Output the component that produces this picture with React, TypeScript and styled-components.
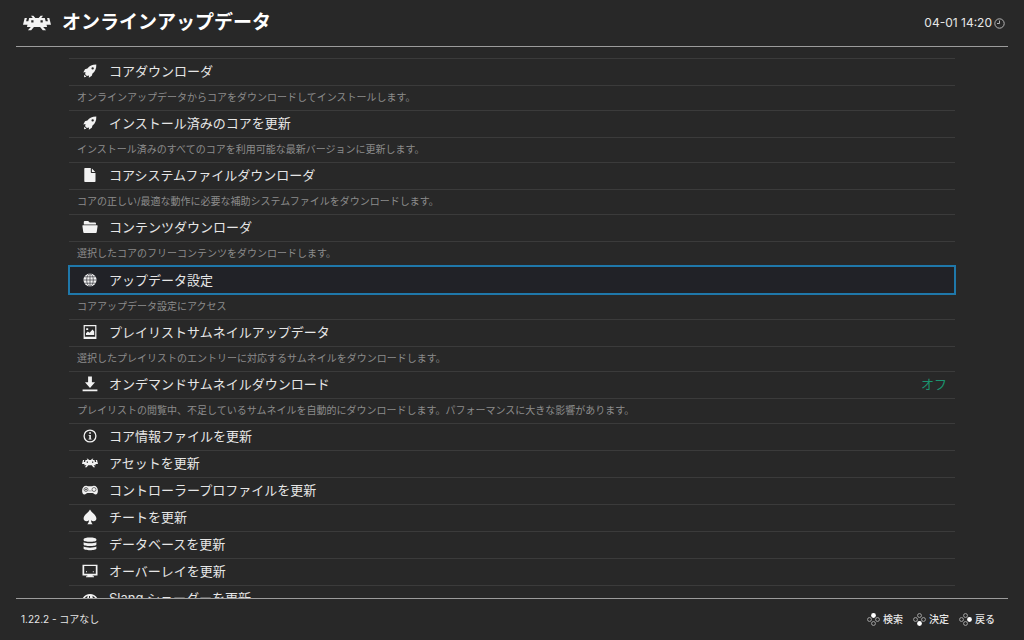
import React from "react";
import styled, { createGlobalStyle } from "styled-components";
import { SiRetroarch } from "react-icons/si";

const GlobalStyle = createGlobalStyle`
  * { box-sizing: border-box; }
  body {
    margin: 0;
    background: #282828;
    color: #e6e6e6;
    font-family: Inter, "Noto Sans CJK JP", sans-serif;
  }
`;

const Page = styled.div`
  display: flex;
  flex-direction: column;
  height: 100vh;
  padding: 0 16px;
`;

const Header = styled.header`
  display: flex;
  align-items: center;
  flex: none;
  height: 47px;
  padding: 0 3px 0 7px;
  border-bottom: 1px solid #9c9c9c;
`;

const Logo = styled(SiRetroarch)`
  width: 28px;
  height: 28px;
  margin-right: 11px;
  color: #f4f4f4;
`;

const Title = styled.h1`
  margin: 0;
  font-size: 19px;
  line-height: 28px;
  font-weight: 700;
  color: #ffffff;
`;

const Clock = styled.div`
  display: flex;
  align-items: center;
  gap: 2px;
  margin-left: auto;
  font-size: 12px;
  line-height: 16px;
`;

const Main = styled.main`
  flex: 1;
  min-height: 0;
  overflow: hidden;
  padding: 11px 53px 0;
`;

const Menu = styled.ul`
  list-style: none;
  margin: 0;
  padding: 0;
`;

const Row = styled.button<{ $selected?: boolean }>`
  display: flex;
  align-items: center;
  gap: 11px;
  width: 100%;
  height: ${(p) => (p.$selected ? 28 : 27)}px;
  padding: 0 8px 2px 13px;
  border: 0;
  border-top: 1px solid #3b3b3b;
  background: ${(p) => (p.$selected ? "#212227" : "transparent")};
  outline: ${(p) => (p.$selected ? "2px solid #1f78aa" : "none")};
  outline-offset: -1px;
  color: inherit;
  font: inherit;
  font-size: 13px;
  line-height: 20px;
  text-align: left;
`;

const Value = styled.span`
  margin-left: auto;
  color: #1b9470;
`;

const Description = styled.p`
  margin: 0;
  height: 25px;
  padding: 0 8px;
  border-top: 1px solid #3b3b3b;
  font-size: 10px;
  line-height: 22px;
  color: #8c8c8c;
  white-space: nowrap;
`;

const Footer = styled.footer`
  display: flex;
  align-items: center;
  justify-content: space-between;
  flex: none;
  height: 42px;
  padding: 0 13px 1px 5px;
  border-top: 1px solid #9c9c9c;
  font-size: 10px;
  line-height: 16px;
`;

const Actions = styled.div`
  display: flex;
  gap: 10px;
`;

const Action = styled.button`
  display: flex;
  align-items: center;
  gap: 3px;
  padding: 0;
  border: 0;
  background: none;
  color: inherit;
  font: inherit;
  font-weight: 500;
`;

const Glyph = styled.svg`
  display: block;
  flex: none;
  width: 16px;
  height: 16px;
  fill: #f2f2f2;
`;

const MenuLogo = styled(SiRetroarch)`
  flex: none;
  width: 16px;
  height: 16px;
  color: #f2f2f2;
`;

const PadGlyph = styled.svg`
  width: 13px;
  height: 13px;
  fill: none;
  stroke: #a8a8a8;
`;

const ClockGlyph = styled.svg`
  width: 11px;
  height: 11px;
  fill: none;
  stroke: #b4b4b4;
`;

const drawings: Record<string, React.ReactNode> = {
  rocket: (
    <path
      fillRule="evenodd"
      d="M14.3 1.5C10.2 1.5 7.4 3 5.4 5.6L3 6.2 1.3 9.4 3.5 9 3.1 11.2 4.9 13 7.1 12.4 6.8 14.7 9.8 12.8 10.5 10.6C13.1 8.5 14.5 5.8 14.3 1.5ZM10.7 4.2A1.2 1.2 0 1 1 10.6 6.6 1.2 1.2 0 0 1 10.7 4.2ZM2.3 11.7 4.4 13.8 2 14.2Z"
    />
  ),
  file: <path d="M2.3 1.6Q2.3 1 3 1H8.8V5.3Q8.8 6 9.5 6H13.5V14.3Q13.5 15 12.8 15H3Q2.3 15 2.3 14.3ZM9.9 1.4 13.2 4.9H9.9Z" />,
  folder: (
    <path d="M1.8 5.6V3Q1.8 2 2.8 2H6.2L7.7 3.5H13Q14 3.5 14 4.5V5.6ZM.9 6.3H15.1Q15.7 6.3 15.6 7L14.7 13.2Q14.6 14 13.8 14H2.2Q1.4 14 1.3 13.2L.4 7Q.3 6.3 .9 6.3Z" />
  ),
  globe: (
    <>
      <circle cx="8" cy="8" r="6.5" />
      <g fill="none" stroke="#3a3b40" strokeWidth=".7">
        <ellipse cx="8" cy="8" rx="3.3" ry="6.3" />
        <path d="M8 1.5V14.5M1.5 8H14.5M2.6 4.8H13.4M2.6 11.2H13.4" />
      </g>
    </>
  ),
  image: (
    <path
      fillRule="evenodd"
      d="M1.6 1H14.4V15H1.6ZM2.8 2.2V12.8H13.2V2.2ZM4 11V9.3L5.8 7.6 7.6 8.7 10.5 5.5 12.2 7.5V11ZM4.2 4.2H6.2V6H4.2Z"
    />
  ),
  download: <path d="M6.1 .6H9.9V6.3H13L8 12 3 6.3H6.1ZM.6 13.6H15.4V15.3H.6Z" />,
  info: (
    <>
      <circle cx="8" cy="8" r="5.9" fill="none" stroke="#f2f2f2" strokeWidth="1.3" />
      <path d="M7.2 4.3H8.9V5.8H7.2ZM6.6 6.9H8.9V10.7H9.6V11.6H6.5V10.7H7.3V7.8H6.6Z" />
    </>
  ),
  pad: (
    <>
      <path d="M4.2 3.8Q5.2 3.8 6 4.3H10Q10.8 3.8 11.8 3.8C14.2 3.8 15.9 5.9 15.9 8.7 15.9 11 15 12.4 13.6 12.4 12.2 12.4 11.6 11.4 10.5 11.1H5.5C4.4 11.4 3.8 12.4 2.4 12.4 1 12.4 .1 11 .1 8.7 .1 5.9 1.8 3.8 4.2 3.8Z" />
      <g fill="none" stroke="#444" strokeWidth=".7">
        <circle cx="4" cy="7.5" r="2" />
        <circle cx="12" cy="7.5" r="2" />
        <path d="M4 6.4V8.6M2.9 7.5H5.1M6.6 8.9H7.6M8.4 8.9H9.4" />
      </g>
    </>
  ),
  spade: (
    <path d="M8 .6C9.3 3.6 14.4 6 14.4 9.6 14.4 12.3 11 13.1 9 11.2 9.1 13 9.7 14.3 10.7 15.3H5.3C6.3 14.3 6.9 13 7 11.2 5 13.1 1.6 12.3 1.6 9.6 1.6 6 6.7 3.6 8 .6Z" />
  ),
  database: (
    <path d="M1.6 3.3C1.6 .9 14.4 .9 14.4 3.3V4.2C14.4 6.3 1.6 6.3 1.6 4.2ZM1.6 6.3C4 7.7 12 7.7 14.4 6.3V8.5C14.4 10.6 1.6 10.6 1.6 8.5ZM1.6 10.6C4 12 12 12 14.4 10.6V12.6C14.4 14.9 1.6 14.9 1.6 12.6Z" />
  ),
  monitor: (
    <path
      fillRule="evenodd"
      d="M.5 1.8H15.5V12.4H10.7V13.3H12V14.3H4V13.3H5.3V12.4H.5ZM2.2 3V10.8H13.8V3ZM4 8.3H5V9.2H4ZM10.8 8.3H11.8V9.2H10.8Z"
    />
  ),
  eye: (
    <>
      <path d="M.5 8.5C3.8 2.6 12.2 2.6 15.5 8.5 12.2 13.5 3.8 13.5 .5 8.5Z" />
      <path d="M2.6 8.3Q3.8 6.4 5.6 5.7 4.7 8.6 6 11 3.7 10.2 2.6 8.3ZM13.4 8.3Q12.2 6.4 10.4 5.7 11.3 8.6 10 11 12.3 10.2 13.4 8.3ZM7 6H8V9H7Z" fill="#282828" />
    </>
  ),
};

type Item = {
  icon: string;
  label: string;
  description?: string;
  value?: string;
  selected?: boolean;
};

const items: Item[] = [
  { icon: "rocket", label: "コアダウンローダ", description: "オンラインアップデータからコアをダウンロードしてインストールします。" },
  { icon: "rocket", label: "インストール済みのコアを更新", description: "インストール済みのすべてのコアを利用可能な最新バージョンに更新します。" },
  { icon: "file", label: "コアシステムファイルダウンローダ", description: "コアの正しい/最適な動作に必要な補助システムファイルをダウンロードします。" },
  { icon: "folder", label: "コンテンツダウンローダ", description: "選択したコアのフリーコンテンツをダウンロードします。" },
  { icon: "globe", label: "アップデータ設定", description: "コアアップデータ設定にアクセス", selected: true },
  { icon: "image", label: "プレイリストサムネイルアップデータ", description: "選択したプレイリストのエントリーに対応するサムネイルをダウンロードします。" },
  {
    icon: "download",
    label: "オンデマンドサムネイルダウンロード",
    value: "オフ",
    description: "プレイリストの閲覧中、不足しているサムネイルを自動的にダウンロードします。パフォーマンスに大きな影響があります。",
  },
  { icon: "info", label: "コア情報ファイルを更新" },
  { icon: "logo", label: "アセットを更新" },
  { icon: "pad", label: "コントローラープロファイルを更新" },
  { icon: "spade", label: "チートを更新" },
  { icon: "database", label: "データベースを更新" },
  { icon: "monitor", label: "オーバーレイを更新" },
  { icon: "eye", label: "Slang シェーダーを更新" },
];

const padPoints = [
  { name: "top", x: 7, y: 2.7 },
  { name: "left", x: 2.7, y: 7 },
  { name: "right", x: 11.3, y: 7 },
  { name: "bottom", x: 7, y: 11.3 },
];

const actions = [
  { pressed: "top", label: "検索" },
  { pressed: "bottom", label: "決定" },
  { pressed: "right", label: "戻る" },
];

function MenuIcon({ name }: { name: string }) {
  if (name === "logo") return <MenuLogo aria-hidden />;
  return (
    <Glyph viewBox="0 0 16 16" aria-hidden>
      {drawings[name]}
    </Glyph>
  );
}

function ButtonHint({ pressed }: { pressed: string }) {
  return (
    <PadGlyph viewBox="0 0 14 14" aria-hidden>
      {padPoints.map((p) =>
        p.name === pressed ? (
          <circle key={p.name} cx={p.x} cy={p.y} r="2.6" fill="#fff" stroke="none" />
        ) : (
          <circle key={p.name} cx={p.x} cy={p.y} r="2.1" />
        )
      )}
    </PadGlyph>
  );
}

export default function App() {
  return (
    <Page lang="ja">
      <GlobalStyle />
      <Header>
        <Logo aria-hidden />
        <Title>オンラインアップデータ</Title>
        <Clock>
          <time>04-01 14:20</time>
          <ClockGlyph viewBox="0 0 11 11" aria-hidden>
            <circle cx="5.5" cy="5.5" r="4.7" />
            <path d="M5.5 2.5V5.5H3" />
          </ClockGlyph>
        </Clock>
      </Header>
      <Main>
        <Menu>
          {items.map((item) => (
            <li key={item.label}>
              <Row type="button" $selected={item.selected}>
                <MenuIcon name={item.icon} />
                <span>{item.label}</span>
                {item.value && <Value>{item.value}</Value>}
              </Row>
              {item.description && <Description>{item.description}</Description>}
            </li>
          ))}
        </Menu>
      </Main>
      <Footer>
        <span>1.22.2 - コアなし</span>
        <Actions>
          {actions.map((a) => (
            <Action type="button" key={a.label}>
              <ButtonHint pressed={a.pressed} />
              {a.label}
            </Action>
          ))}
        </Actions>
      </Footer>
    </Page>
  );
}
